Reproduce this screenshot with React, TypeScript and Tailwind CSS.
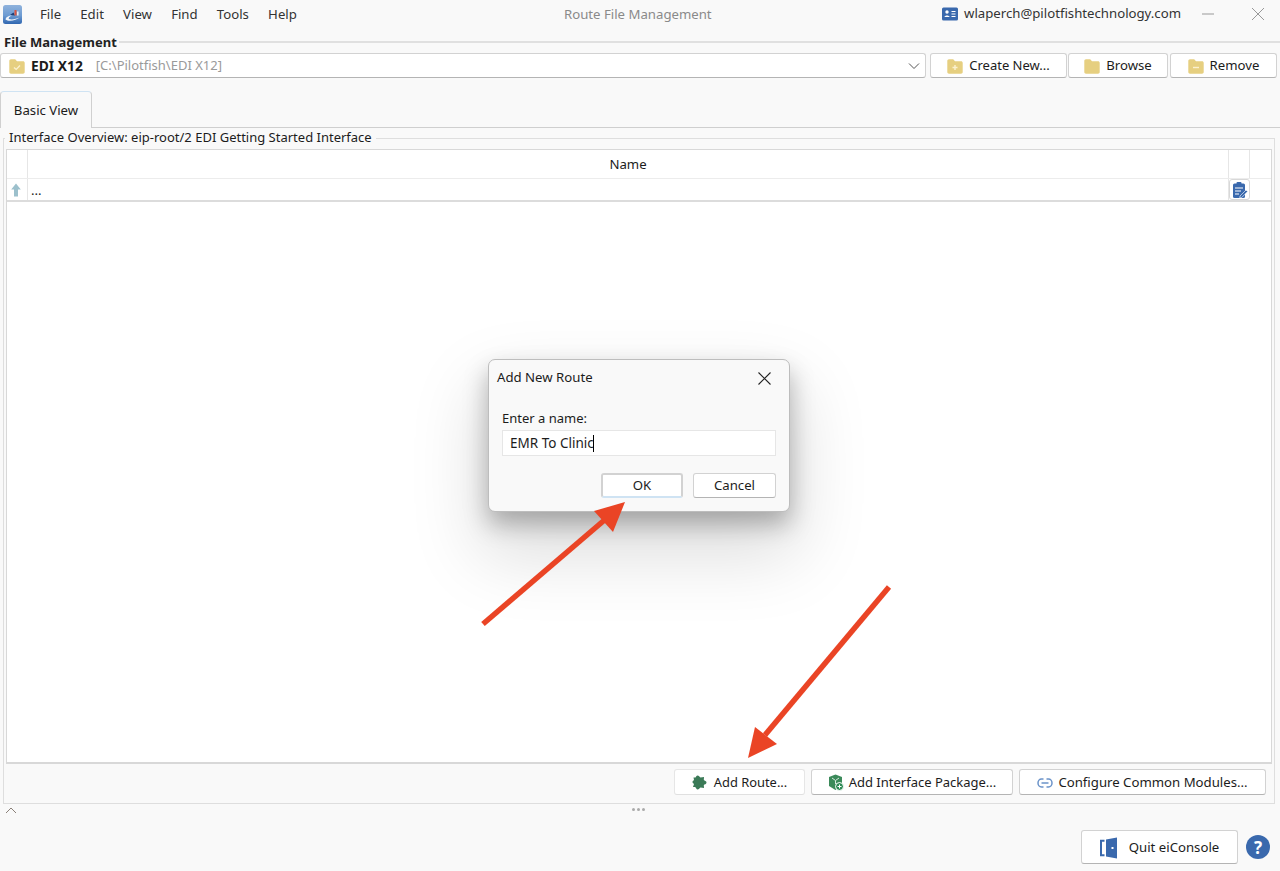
import React from "react";

const FolderIcon = ({ mark }: { mark?: "check" | "plus" | "minus" }) => (
  <svg width="16" height="15" viewBox="0 0 16 15" className="shrink-0">
    <path d="M0.3 2C0.3 1 1 0.3 2 0.3H6.2L8 2.2H14C15 2.2 15.7 2.9 15.7 3.9V13C15.7 14 15 14.7 14 14.7H2C1 14.7 0.3 14 0.3 13Z" fill="#e6cf80" />
    {mark === "check" && <path d="M5 8.4L7.2 10.4L11 6.6" stroke="#fbf1cf" strokeWidth="1.4" fill="none" />}
    {mark === "plus" && <path d="M8 6V11M5.5 8.5H10.5" stroke="#fbf1cf" strokeWidth="1.4" fill="none" />}
    {mark === "minus" && <path d="M5 8.5H11" stroke="#fbf1cf" strokeWidth="1.4" fill="none" />}
  </svg>
);

const Logo = () => (
  <svg width="19" height="19" viewBox="0 0 19 19">
    <defs>
      <linearGradient id="lg" x1="0" y1="0" x2="0" y2="1">
        <stop offset="0" stopColor="#8fb2dc" />
        <stop offset="0.55" stopColor="#6d9bd2" />
        <stop offset="1" stopColor="#2f66b0" />
      </linearGradient>
    </defs>
    <rect width="19" height="19" rx="2.5" fill="url(#lg)" />
    <path d="M2.5 14.5C3 11.5 6.5 10.5 9 10.5C6.5 11.5 5 13 6 14C9 15 13 14 16.5 12.5C13.5 15.5 5.5 17 2.5 14.5Z" fill="#f1f5fa" />
    <path d="M7 10L10.5 7.5L12 10.5Z" fill="#1c3f78" />
    <rect x="11.5" y="5" width="2" height="5.5" fill="#d9553f" />
    <rect x="14" y="6.5" width="1.6" height="4" fill="#e9edf3" />
  </svg>
);

const Btn = ({ className, children }: { className: string; children: React.ReactNode }) => (
  <button className={`flex items-center justify-center rounded-[3px] border border-[#d2d2d2] border-b-[#b4b4b4] bg-white text-[#1c1c1c] ${className}`}>
    {children}
  </button>
);

const Arrow = ({ x1, y1, x2, y2, head }: { x1: number; y1: number; x2: number; y2: number; head: string }) => (
  <svg className="pointer-events-none absolute left-0 top-0" viewBox="0 0 1280 871" width="1280" height="871">
    <line x1={x1} y1={y1} x2={x2} y2={y2} stroke="#ea4425" strokeWidth="5.5" />
    <polygon points={head} fill="#ea4425" />
  </svg>
);

export default function App() {
  return (
    <div className="relative flex h-[871px] w-[1280px] flex-col overflow-hidden bg-[#f9f9f9] font-['Noto_Sans',sans-serif] text-[13.2px] text-[#1c1c1c]">
      {/* Title bar */}
      <div className="relative flex h-[28px] shrink-0 items-center text-[#333]">
        <div className="ml-[3px] mr-[18px] flex"><Logo /></div>
        <nav className="flex gap-[19.2px] pt-[2px]">
          {["File", "Edit", "View", "Find", "Tools", "Help"].map((m) => (
            <span key={m}>{m}</span>
          ))}
        </nav>
        <div className="absolute left-[564px] top-[5px] text-[#8a8a8a]">Route File Management</div>
        <div className="ml-auto flex items-center">
          <svg width="16" height="14" viewBox="0 0 16 14" className="mr-[6px]">
            <rect width="16" height="13" y="0.5" rx="1.5" fill="#3a69ad" />
            <circle cx="5" cy="5" r="1.7" fill="#fff" />
            <path d="M2.5 10C2.5 8 7.5 8 7.5 10Z" fill="#fff" />
            <path d="M9.5 4.5H13.5M9.5 7H13.5M9.5 9.5H13.5" stroke="#fff" strokeWidth="1" />
          </svg>
          <span>wlaperch@pilotfishtechnology.com</span>
          <svg width="14" height="14" viewBox="0 0 14 14" className="ml-[20px]">
            <path d="M1 7H13" stroke="#999" strokeWidth="1" />
          </svg>
          <svg width="14" height="14" viewBox="0 0 14 14" className="ml-[36px] mr-[15px]">
            <path d="M1 1L13 13M13 1L1 13" stroke="#999" strokeWidth="1" />
          </svg>
        </div>
      </div>

      {/* File Management */}
      <div className="mt-[6px] flex h-[16px] items-center pl-[4px]">
        <span className="text-[13px] font-bold leading-none text-[#222]">File Management</span>
        <div className="ml-[2px] h-[2px] flex-1 bg-[#e0e0e0]" />
      </div>
      <div className="mt-[3px] flex h-[25px] pr-[3px]">
        <div className="flex w-[926px] items-center rounded-[3px] border border-[#d2d2d2] border-b-[#b4b4b4] bg-white pl-[8px] pt-px">
          <FolderIcon mark="check" />
          <span className="ml-[6px] text-[13.8px] font-bold">EDI X12</span>
          <span className="ml-[13px] text-[13px] text-[#9a9a9a]">[C:\Pilotfish\EDI X12]</span>
          <svg width="12" height="8" viewBox="0 0 12 8" className="ml-auto mr-[5px]">
            <path d="M1 1.5L6 6.5L11 1.5" stroke="#555" fill="none" />
          </svg>
        </div>
        <Btn className="ml-[4px] w-[137px] gap-[6px] pt-px text-[13px]"><FolderIcon mark="plus" />Create New...</Btn>
        <Btn className="ml-px w-[100px] gap-[6px] pt-px"><FolderIcon />Browse</Btn>
        <Btn className="ml-[2px] w-[107px] gap-[6px] pt-px"><FolderIcon mark="minus" />Remove</Btn>
      </div>

      {/* Tabs */}
      <div className="mt-[13px] flex h-[37px] shrink-0 items-end border-b border-[#cfcfcf]">
        <div className="relative -mb-px flex h-[37px] w-[92px] items-center justify-center rounded-t-[4px] border border-b-0 border-[#d0d0d0] border-t-[#cfe3f3] bg-[#f9f9f9] pt-[1px]">
          Basic View
        </div>
      </div>

      {/* Fieldset */}
      <div className="relative ml-[3px] mr-[5px] mt-[10px] flex h-[666px] flex-col border border-[#dedede] px-[2px] pt-[10px]">
        <span className="absolute -top-[10px] left-[1px] bg-[#f9f9f9] px-[4px] text-[13px] leading-[17px]">
          Interface Overview: eip-root/2 EDI Getting Started Interface
        </span>
        <div className="flex h-[615px] flex-col border-x border-t border-b-2 border-[#d8d8d8] bg-white">
          <div className="flex h-[29px] border-b border-[#ececec]">
            <div className="w-[21px] border-r border-[#e6e6e6]" />
            <div className="flex flex-1 items-center justify-center border-r border-[#e6e6e6] pt-px">Name</div>
            <div className="w-[21px] border-r border-[#e6e6e6]" />
            <div className="w-[21px]" />
          </div>
          <div className="flex h-[23px] border-b-2 border-[#dcdcdc]">
            <div className="flex w-[21px] items-center justify-center border-r border-[#e6e6e6] pr-[2px]">
              <svg width="10" height="14" viewBox="0 0 10 14">
                <path d="M5 0.5L9.8 6.5H7V13.5H3V6.5H0.2Z" fill="#9cc0cc" />
              </svg>
            </div>
            <div className="flex flex-1 items-center border-r border-[#e6e6e6] pl-[3px] pt-[2px] leading-none">...</div>
            <div className="flex w-[21px] items-center justify-center rounded-[3px] border border-[#d8d8d8]">
              <svg width="16" height="18" viewBox="0 0 16 18">
                <rect x="1" y="2.5" width="12" height="14.5" rx="1.5" fill="#3a69ad" />
                <rect x="4.5" y="1" width="5" height="3" rx="1" fill="#3a69ad" />
                <path d="M3 7H11M3 10H9M3 13H7" stroke="#fff" strokeWidth="1.1" />
                <path d="M8 15L14 9L15.6 10.6L9.6 16.6L7.8 17Z" fill="#3a69ad" stroke="#fff" strokeWidth="0.6" />
              </svg>
            </div>
            <div className="w-[21px]" />
          </div>
        </div>
        <div className="mt-[5px] flex h-[26px] justify-end gap-[6px] pr-[6px]">
          <Btn className="w-[131px] gap-[7px] border-[#e6e6e6] border-b-[#e0e0e0] bg-[#f6f6f6] pt-px text-[12.9px]">
            <svg width="15" height="15" viewBox="0 0 15 15">
              <path d="M5.5 0.5C7 0.5 7.5 2 8.5 2.5L12 2L11.8 5C12.5 5.5 14.5 6 14.5 7.5C14.5 9 12.5 9.5 11.8 10L12 13L8.5 12.5C7.5 13 7 14.5 5.5 14.5C4.5 14.5 4 12.5 3 12L1 12L2 9C1.5 8.5 0.5 8 0.5 7C0.5 6 1.5 5.5 2 5L1.5 2.5L3.5 2.5C4 2 4.5 0.5 5.5 0.5Z" fill="#3b7a57" />
            </svg>
            Add Route...
          </Btn>
          <Btn className="w-[202px] gap-[5px] pt-px text-[13px]">
            <svg width="16" height="17" viewBox="0 0 16 17">
              <path d="M7.5 0.5L14 3V12L7.5 16L1 12V3Z" fill="#3b8a5a" />
              <path d="M4 4L7.5 6.5L11 4M7.5 6.5V10" stroke="#d7eadf" fill="none" />
              <circle cx="11.5" cy="12.5" r="4" fill="#2f8b57" stroke="#fff" />
              <path d="M11.5 10.5V14.5M9.5 12.5H13.5" stroke="#fff" />
            </svg>
            Add Interface Package...
          </Btn>
          <Btn className="w-[247px] gap-[5px] pt-px">
            <svg width="16" height="10" viewBox="0 0 16 10">
              <path d="M6.5 1H4.5C2.5 1 1 2.8 1 5C1 7.2 2.5 9 4.5 9H6.5M9.5 1H11.5C13.5 1 15 2.8 15 5C15 7.2 13.5 9 11.5 9H9.5" stroke="#6b93c9" strokeWidth="1.5" fill="none" />
              <path d="M4.5 5H11.5" stroke="#6b93c9" strokeWidth="1.5" />
            </svg>
            Configure Common Modules...
          </Btn>
        </div>
      </div>

      {/* Splitter */}
      <div className="relative flex h-[12px] shrink-0 items-center">
        <svg width="12" height="7" viewBox="0 0 12 7" className="ml-[5px]">
          <path d="M1 6L6 1L11 6" stroke="#8a8078" fill="none" />
        </svg>
        <div className="absolute left-[632px] top-[4px] flex gap-[2px]">
          <span className="h-[3px] w-[3px] rounded-full bg-[#aaa]" />
          <span className="h-[3px] w-[3px] rounded-full bg-[#aaa]" />
          <span className="h-[3px] w-[3px] rounded-full bg-[#aaa]" />
        </div>
      </div>

      {/* Footer */}
      <div className="mt-[14px] flex h-[34px] justify-end pr-[10px]">
        <Btn className="w-[157px] gap-[10px] pt-px">
          <svg width="19" height="22" viewBox="0 0 19 22">
            <path d="M4.5 3.8H1V18.2H4.5" stroke="#3a69ad" strokeWidth="2" fill="none" />
            <path d="M6 2.5L17 0.5V21.5L6 19.5Z" fill="#3a69ad" />
            <rect x="11.5" y="10" width="2" height="2" fill="#fff" />
          </svg>
          Quit eiConsole
        </Btn>
        <div className="ml-[8px] flex h-[24px] w-[24px] items-center justify-center self-center rounded-full bg-[#3a69ad] text-[17px] font-bold leading-none text-white">
          ?
        </div>
      </div>

      {/* Arrow: Add Route */}
      <Arrow x1={889} y1={587} x2={765} y2={735} head="748,758 777,744 755,727" />

      {/* Dialog */}
      <div className="absolute left-[488px] top-[359px] flex h-[153px] w-[302px] flex-col rounded-[7px] border border-[#bdbdbd] bg-[#f9f9f9] shadow-[0_12px_24px_rgba(0,0,0,0.28),0_35px_70px_10px_rgba(0,0,0,0.13)]">
        <div className="flex h-[35px] items-center justify-between pl-[8px] pr-[18px] pt-[1px]">
          <span>Add New Route</span>
          <svg width="13" height="13" viewBox="0 0 13 13">
            <path d="M0.5 0.5L12.5 12.5M12.5 0.5L0.5 12.5" stroke="#222" strokeWidth="1.1" />
          </svg>
        </div>
        <div className="mt-[14px] pl-[13px] text-[13px] leading-[18px]">Enter a name:</div>
        <div className="mx-[13px] mt-[3px] flex h-[26px] items-center border border-[#e6e6e6] bg-white pl-[7px] text-[13.5px]">
          EMR To Clinic
          <span className="-ml-[1px] h-[17px] w-px bg-black" />
        </div>
        <div className="mt-[17px] flex justify-end gap-[10px] pr-[13px]">
          <Btn className="h-[25px] w-[82px] border-2 border-[#cfe3f3] border-b-[#cfe3f3] pt-px">OK</Btn>
          <Btn className="h-[25px] w-[83px] pt-px">Cancel</Btn>
        </div>
      </div>

      {/* Arrow: OK */}
      <Arrow x1={483} y1={624} x2={608} y2={517} head="625,502 594,511 613,532" />
    </div>
  );
}
